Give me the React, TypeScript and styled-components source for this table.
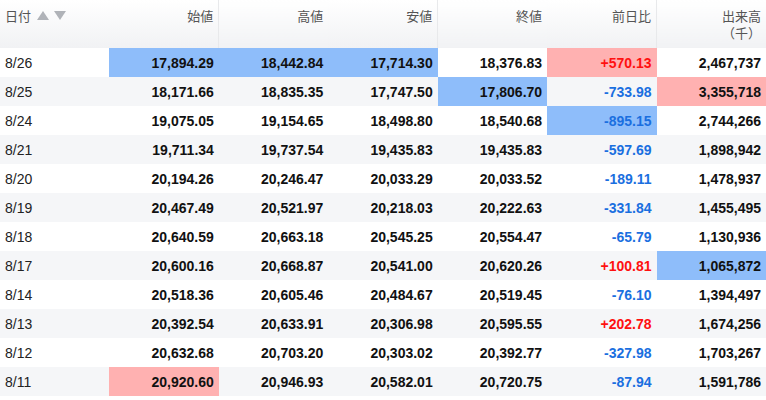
import React from "react"
import styled, { createGlobalStyle } from "styled-components"

type Mark = "" | "blue" | "pink"

type Row = {
  date: string
  open: string
  high: string
  low: string
  close: string
  change: string
  volume: string
  marks: Mark[]
}

const rows: Row[] = [
  { date: "8/26", open: "17,894.29", high: "18,442.84", low: "17,714.30", close: "18,376.83", change: "+570.13", volume: "2,467,737", marks: ["blue", "blue", "blue", "", "pink", ""] },
  { date: "8/25", open: "18,171.66", high: "18,835.35", low: "17,747.50", close: "17,806.70", change: "-733.98", volume: "3,355,718", marks: ["", "", "", "blue", "", "pink"] },
  { date: "8/24", open: "19,075.05", high: "19,154.65", low: "18,498.80", close: "18,540.68", change: "-895.15", volume: "2,744,266", marks: ["", "", "", "", "blue", ""] },
  { date: "8/21", open: "19,711.34", high: "19,737.54", low: "19,435.83", close: "19,435.83", change: "-597.69", volume: "1,898,942", marks: [] },
  { date: "8/20", open: "20,194.26", high: "20,246.47", low: "20,033.29", close: "20,033.52", change: "-189.11", volume: "1,478,937", marks: [] },
  { date: "8/19", open: "20,467.49", high: "20,521.97", low: "20,218.03", close: "20,222.63", change: "-331.84", volume: "1,455,495", marks: [] },
  { date: "8/18", open: "20,640.59", high: "20,663.18", low: "20,545.25", close: "20,554.47", change: "-65.79", volume: "1,130,936", marks: [] },
  { date: "8/17", open: "20,600.16", high: "20,668.87", low: "20,541.00", close: "20,620.26", change: "+100.81", volume: "1,065,872", marks: ["", "", "", "", "", "blue"] },
  { date: "8/14", open: "20,518.36", high: "20,605.46", low: "20,484.67", close: "20,519.45", change: "-76.10", volume: "1,394,497", marks: [] },
  { date: "8/13", open: "20,392.54", high: "20,633.91", low: "20,306.98", close: "20,595.55", change: "+202.78", volume: "1,674,256", marks: [] },
  { date: "8/12", open: "20,632.68", high: "20,703.20", low: "20,303.02", close: "20,392.77", change: "-327.98", volume: "1,703,267", marks: [] },
  { date: "8/11", open: "20,920.60", high: "20,946.93", low: "20,582.01", close: "20,720.75", change: "-87.94", volume: "1,591,786", marks: ["pink"] },
]

const GlobalStyle = createGlobalStyle`
  body {
    margin: 0;
    background: #fff;
    font-family: "Liberation Sans", Arial, "Noto Sans CJK JP", sans-serif;
  }
`

const Table = styled.table`
  width: 766px;
  table-layout: fixed;
  border-collapse: collapse;
  border-spacing: 0;
`

const HeadCell = styled.th<{ $sep?: boolean; $left?: boolean }>`
  height: 48px;
  padding: 8px 5px 0;
  vertical-align: top;
  text-align: ${p => (p.$left ? "left" : "right")};
  font-weight: normal;
  font-size: 13px;
  line-height: 17px;
  color: #555;
  background: linear-gradient(#ffffff, #f1f2f4);
  border-right: ${p => (p.$sep ? "1px solid #e8e9eb" : "none")};
  box-sizing: border-box;
`

const SortArrows = styled.span`
  display: inline-flex;
  gap: 5px;
  margin-left: 6px;
  vertical-align: 1px;
  svg {
    display: block;
  }
`

const BodyRow = styled.tr<{ $odd: boolean }>`
  height: 29px;
  background: ${p => (p.$odd ? "#f5f6f8" : "#ffffff")};
`

const Cell = styled.td<{ $mark?: Mark; $tone?: "up" | "down" }>`
  padding: 0 5px;
  text-align: right;
  font-size: 14px;
  font-weight: bold;
  color: ${p => (p.$tone === "up" ? "#ff1010" : p.$tone === "down" ? "#1a6fe0" : "#111")};
  background: ${p => (p.$mark === "blue" ? "#8ebdfa" : p.$mark === "pink" ? "#ffb1b1" : "transparent")};
  white-space: nowrap;
`

const DateCell = styled.td`
  padding: 0 5px;
  text-align: left;
  font-size: 14px;
  color: #222;
`

const Triangle = ({ up }: { up?: boolean }) => (
  <svg width="12" height="9" viewBox="0 0 12 9">
    <polygon points={up ? "6,0 12,9 0,9" : "0,0 12,0 6,9"} fill="#b0b3b8" />
  </svg>
)

export default function App() {
  return (
    <>
      <GlobalStyle />
      <Table>
        <thead>
          <tr>
            <HeadCell $left>
              日付
              <SortArrows>
                <Triangle up />
                <Triangle />
              </SortArrows>
            </HeadCell>
            <HeadCell $sep>始値</HeadCell>
            <HeadCell>高値</HeadCell>
            <HeadCell $sep>安値</HeadCell>
            <HeadCell>終値</HeadCell>
            <HeadCell $sep>前日比</HeadCell>
            <HeadCell>
              出来高
              <br />
              （千）
            </HeadCell>
          </tr>
        </thead>
        <tbody>
          {rows.map((r, i) => {
            const values = [r.open, r.high, r.low, r.close, r.change, r.volume]
            return (
              <BodyRow key={r.date} $odd={i % 2 === 1}>
                <DateCell>{r.date}</DateCell>
                {values.map((v, j) => (
                  <Cell
                    key={j}
                    $mark={r.marks[j]}
                    $tone={j === 4 ? (v.startsWith("+") ? "up" : "down") : undefined}
                  >
                    {v}
                  </Cell>
                ))}
              </BodyRow>
            )
          })}
        </tbody>
      </Table>
    </>
  )
}
